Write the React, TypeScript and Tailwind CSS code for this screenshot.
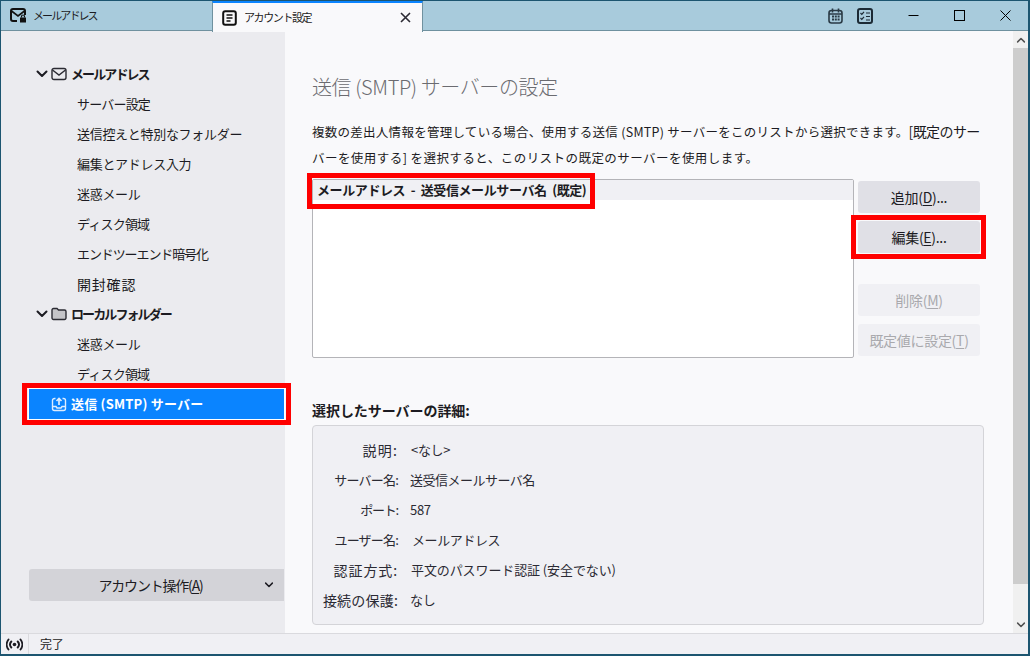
import React from "react";

const FONT = { fontFamily: '"Noto Sans CJK JP", "Noto Sans", sans-serif' };

function Chevron({ className = "" }: { className?: string }) {
  return (
    <svg width="12" height="12" viewBox="0 0 12 12" className={className} fill="none" stroke="currentColor" strokeWidth="2" strokeLinecap="round" strokeLinejoin="round">
      <path d="M1.5 3.5 6 8l4.5-4.5" />
    </svg>
  );
}

function MailIcon() {
  return (
    <svg width="16" height="14" viewBox="0 0 16 14" fill="none" stroke="#2b2b33" strokeWidth="1.4">
      <rect x="1" y="1.5" width="14" height="11" rx="2" />
      <path d="M1.5 3 8 8l6.5-5" />
    </svg>
  );
}

function FolderIcon() {
  return (
    <svg width="16" height="14" viewBox="0 0 16 14">
      <path d="M1 3a1.5 1.5 0 0 1 1.5-1.5h3.5L7.5 3h6A1.5 1.5 0 0 1 15 4.5V11a1.5 1.5 0 0 1-1.5 1.5h-11A1.5 1.5 0 0 1 1 11z" fill="#c4c4c8" stroke="#2b2b33" strokeWidth="1.4" />
    </svg>
  );
}

function OutboxIcon() {
  return (
    <svg width="16" height="16" viewBox="0 0 16 16" fill="none" stroke="#dcecff" strokeWidth="1.4">
      <path d="M4.5 2.5h-1a2 2 0 0 0-2 2v8a2 2 0 0 0 2 2h9a2 2 0 0 0 2-2v-8a2 2 0 0 0-2-2h-1" />
      <path d="M1.5 10.5h3.5l1 1.5h4l1-1.5h3.5" />
      <path d="M8 9V3M5.5 5 8 2.5 10.5 5" strokeWidth="1.7" />
    </svg>
  );
}

function Head({ label, icon }: { label: string; icon: React.ReactNode }) {
  return (
    <div className="h-[30px] flex items-center pl-[35px] text-[#1c1b22]">
      <Chevron className="mr-[3px]" />
      <span className="mr-[4px] flex">{icon}</span>
      <span className="font-bold tracking-[-1.9px]">{label}</span>
    </div>
  );
}

function Leaf({ label, cls = "" }: { label: string; cls?: string }) {
  return <div className={`h-[30px] flex items-center pl-[76px] text-[#1c1b22] ${cls}`}>{label}</div>;
}

function Btn({ label, u, tail = "", disabled }: { label: string; u: string; tail?: string; disabled?: boolean }) {
  return (
    <div className={`w-[122px] h-[32px] rounded-[3px] flex items-center justify-center text-[14px] ${disabled ? "bg-[#f0f0f4] text-[#a9a9ad]" : "bg-[#e0e0e6] text-[#1c1b22]"}`}>
      {label}(<span className="underline underline-offset-2">{u}</span>){tail}
    </div>
  );
}

function Detail({ k, v, cls = "", vcls = "" }: { k: string; v: string; cls?: string; vcls?: string }) {
  return (
    <div className="h-[30px] flex items-center text-[#2b2a33]">
      <div className={`w-[85px] text-right shrink-0 whitespace-nowrap ${cls}`}>{k}</div>
      <div className={`ml-[12px] ${vcls}`}>{v}</div>
    </div>
  );
}

export default function App() {
  return (
    <div style={FONT} className="w-[1030px] h-[656px] flex flex-col bg-[#f9f9fb] border-t-[1px] border-l-[1px] border-r-[2px] border-b-[2px] border-[#1c5570] text-[13px] tracking-[-0.3px] overflow-hidden">
      {/* tab bar */}
      <div className="h-[30px] shrink-0 flex bg-[#a8cbdc] border-b border-[#6f919f] text-[#1c1b22]">
        <div className="w-[211px] flex items-center pl-[9px] text-[11px]">
          <svg width="18" height="16" viewBox="0 0 18 16" fill="none" stroke="#111" strokeWidth="2">
            <path d="M7 13H3a2 2 0 0 1-2-2V3a2 2 0 0 1 2-2h10a2 2 0 0 1 2 2v4" />
            <path d="M1.5 3 8 8l6.5-5" strokeWidth="1.6" />
            <rect x="10" y="9.5" width="6" height="5" fill="#111" stroke="none" />
            <path d="M11.5 9.5V8.5a1.5 1.5 0 0 1 3 0v1" strokeWidth="1.2" />
          </svg>
          <span className="ml-[5px] tracking-[-1.9px]">メールアドレス</span>
        </div>
        <div className="w-[211px] h-[31px] bg-[#f9f9fb] border-t-[2px] border-[#0a84ff] border-x-[1px] border-x-[#6f919f] flex items-center pl-[9px] pr-[11px] text-[11px] z-10">
          <svg width="15" height="16" viewBox="0 0 15 16" fill="none" stroke="#111">
            <rect x="1.2" y="1.2" width="12.6" height="13.6" rx="2" strokeWidth="2" />
            <path d="M4.5 5h6M4.5 8h6M4.5 11h4" strokeWidth="1.3" />
          </svg>
          <span className="ml-[7px] flex-1 tracking-[-1.4px]">アカウント設定</span>
          <svg width="11" height="11" viewBox="0 0 11 11" stroke="#2b2a33" strokeWidth="1.6">
            <path d="M1 1l9 9M10 1l-9 9" />
          </svg>
        </div>
        <div className="flex-1 flex items-center">
          <div className="ml-[405px] flex items-center">
            <svg width="15" height="16" viewBox="0 0 15 16" fill="none" stroke="#2a3a45" strokeWidth="1.6">
              <rect x="1" y="2.5" width="13" height="12.5" rx="2.5" />
              <path d="M4.5 0.5v4M10.5 0.5v4M1 6h13" />
              <path d="M4 8.5h2M6.8 8.5h2M9.6 8.5h2M4 11.5h2M6.8 11.5h2M9.6 11.5h2" strokeWidth="1.8" />
            </svg>
            <svg className="ml-[14px]" width="16" height="16" viewBox="0 0 16 16" fill="none" stroke="#1c2a35">
              <rect x="1" y="1" width="14" height="14" rx="2" strokeWidth="2" />
              <path d="M3.5 5l1.3 1.3L7 3.8M3.5 10l1.3 1.3L7 8.8M9 5h4M9 8.5h4M9 12h4" strokeWidth="1.2" />
            </svg>
            <svg className="ml-[35px]" width="11" height="11" viewBox="0 0 11 11" stroke="#000"><path d="M0.5 5.5h10" /></svg>
            <svg className="ml-[35px]" width="11" height="11" viewBox="0 0 11 11" fill="none" stroke="#000"><rect x="0.5" y="0.5" width="10" height="10" /></svg>
            <svg className="ml-[35px]" width="11" height="11" viewBox="0 0 11 11" stroke="#000"><path d="M0.5 0.5l10 10M10.5 0.5l-10 10" /></svg>
          </div>
        </div>
      </div>

      {/* body */}
      <div className="flex-1 flex min-h-0">
        {/* sidebar */}
        <div className="w-[284px] shrink-0 bg-[#ebebef] flex flex-col pt-[28px] pb-[32px]">
          <Head icon={<MailIcon />} label="メールアドレス" />
          <Leaf label="サーバー設定" cls="tracking-[-0.8px]" />
          <Leaf label="送信控えと特別なフォルダー" />
          <Leaf label="編集とアドレス入力" />
          <Leaf label="迷惑メール" />
          <Leaf label="ディスク領域" cls="tracking-[-0.8px]" />
          <Leaf label="エンドツーエンド暗号化" cls="tracking-[-1.1px]" />
          <Leaf label="開封確認" cls="text-[14px] tracking-[0.8px]" />
          <Head icon={<FolderIcon />} label="ローカルフォルダー" />
          <Leaf label="迷惑メール" />
          <Leaf label="ディスク領域" cls="tracking-[-0.8px]" />
          <div className="relative ml-[28px] mr-[1px] h-[30px] bg-[#0a84ff] flex items-center pl-[22px] text-white font-bold tracking-[0.2px] outline outline-1 outline-white">
            <span className="mr-[4px] flex"><OutboxIcon /></span>
            送信 (SMTP) サーバー
            <div className="absolute -left-[7px] -top-[6px] w-[269px] h-[42px] border-[5px] border-[#ff0000] pointer-events-none" />
          </div>
          <div className="flex-1" />
          <div className="ml-[28px] mr-[1px] h-[32px] rounded-l-[3px] bg-[#d3d3d8] flex items-center text-[#1c1b22] relative">
            <span className="w-full text-center pr-[12px] text-[14px] tracking-[-1.2px]">アカウント操作(<span className="underline underline-offset-2">A</span>)</span>
            <Chevron className="absolute right-[9px] scale-75" />
          </div>
        </div>

        {/* content */}
        <div className="flex-1 min-w-0 pl-[27px] pt-[40px]">
          <div className="text-[20px] leading-[32px] tracking-[-0.4px] text-[#6b6b70] font-light">送信 (SMTP) サーバーの設定</div>
          <div className="mt-[16px] w-[690px] leading-[26px] text-[#1c1b22] text-[12.5px] tracking-[0.27px]">
            複数の差出人情報を管理している場合、使用する送信 (SMTP) サーバーをこのリストから選択できます。<span className="text-[14px] leading-none tracking-[-0.6px]">[既定のサー</span><br /><span className="tracking-[0.45px]">バーを使用する] を選択すると、このリストの既定のサーバーを使用します。</span>
          </div>
          <div className="mt-[8px] flex w-[668px]">
            <div className="w-[542px] h-[179px] bg-white border border-[#b4b4b8] rounded-[2px]">
              <div className="relative h-[20px] bg-[#f0f0f4] flex items-center pl-[4px] font-bold text-[#1c1b22] tracking-[-0.4px] [word-spacing:3px]">
                メールアドレス - 送受信メールサーバ名 (既定)
                <div className="absolute -left-[6px] -top-[7px] w-[288px] h-[36px] border-[5px] border-[#ff0000] pointer-events-none" />
              </div>
            </div>
            <div className="ml-[4px] flex flex-col pt-[2px]">
              <Btn label="追加" u="D" tail="..." />
              <div className="relative mt-[8px]">
                <Btn label="編集" u="E" tail="..." />
                <div className="absolute -left-[7px] -top-[6px] w-[135px] h-[44px] border-[5px] border-[#ff0000] pointer-events-none" />
              </div>
              <div className="mt-[31px]"><Btn label="削除" u="M" disabled /></div>
              <div className="mt-[8px]"><Btn label="既定値に設定" u="T" disabled /></div>
            </div>
          </div>
          <div className="mt-[42px] font-bold text-[14px] leading-[20px] text-[#1c1b22] tracking-[-0.05px]">選択したサーバーの詳細:</div>
          <div className="mt-[5px] w-[672px] h-[200px] bg-[#f0f0f4] border border-[#d4d4d8] rounded-[4px] py-[9px]">
            <Detail k="説明:" v="<なし>" cls="text-[14px] tracking-[1.2px]" vcls="pl-[1px]" />
            <Detail k="サーバー名:" v="送受信メールサーバ名" cls="tracking-[-0.8px]" vcls="tracking-[-0.5px]" />
            <Detail k="ポート:" v="587" cls="tracking-[-1.2px]" />
            <Detail k="ユーザー名:" v="メールアドレス" cls="tracking-[-0.8px]" vcls="pl-[2px] tracking-[-0.4px]" />
            <Detail k="認証方式:" v="平文のパスワード認証 (安全でない)" cls="text-[14px] tracking-[0.9px]" vcls="pl-[1px] tracking-[-0.1px]" />
            <Detail k="接続の保護:" v="なし" cls="text-[14px] tracking-[0.2px]" />
          </div>
        </div>

        {/* scrollbar */}
        <div className="w-[15px] shrink-0 bg-[#f0f0f0] flex flex-col items-center text-[#505050] mr-[0px]">
          <div className="h-[17px] flex items-center"><Chevron className="rotate-180 scale-75" /></div>
          <div className="w-full h-[536px] bg-[#cdcdcd]" />
          <div className="flex-1" />
          <div className="h-[17px] flex items-center"><Chevron className="scale-75" /></div>
        </div>
      </div>

      {/* status */}
      <div className="h-[21px] shrink-0 flex items-center bg-[#f0f0f4] border-t border-[#dadade] text-[#1c1b22] text-[12px]">
        <div className="w-[28px] h-full flex items-center justify-center border-r border-[#dadade]">
          <svg width="17" height="13" viewBox="0 0 17 13" fill="none" stroke="#1c1b22" strokeWidth="1.9" strokeLinecap="round">
            <circle cx="8.5" cy="6.5" r="1.8" fill="#1c1b22" stroke="none" />
            <path d="M5.3 3.5a4.5 4.5 0 0 0 0 6M11.7 3.5a4.5 4.5 0 0 1 0 6M2.5 1.5a8 8 0 0 0 0 10M14.5 1.5a8 8 0 0 1 0 10" />
          </svg>
        </div>
        <span className="ml-[11px]">完了</span>
      </div>
    </div>
  );
}
